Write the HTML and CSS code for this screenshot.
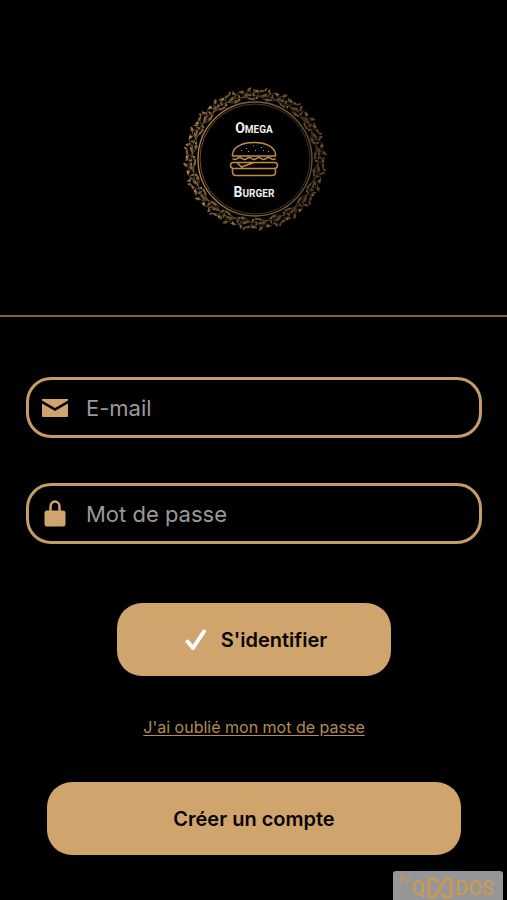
FILE: index.html
```html
<!DOCTYPE html>
<html lang="fr">
<head>
<meta charset="utf-8">
<meta name="viewport" content="width=device-width, initial-scale=1">
<title>Omega Burger</title>
<link rel="stylesheet" href="styles.css">
</head>
<body>
<header class="hero">
  <svg class="logo" viewBox="0 0 160 160" role="img" aria-label="Omega Burger">
    <defs>
      <linearGradient id="gold" x1="0" y1="0" x2="1" y2="0">
        <stop offset="0" stop-color="#b98645"/>
        <stop offset="0.4" stop-color="#80603a"/>
        <stop offset="1" stop-color="#6b5335"/>
      </linearGradient>
      <linearGradient id="shade" gradientUnits="userSpaceOnUse" x1="10" y1="70" x2="150" y2="90">
        <stop offset="0" stop-color="#fff"/>
        <stop offset="0.4" stop-color="#ccc"/>
        <stop offset="1" stop-color="#999"/>
      </linearGradient>
      <mask id="fade" maskUnits="userSpaceOnUse" x="0" y="0" width="160" height="160">
        <rect width="160" height="160" fill="url(#shade)"/>
      </mask>
      <g id="sprig">
        <path class="stem" d="M-16 -58Q-8 -66 4 -63T15 -68M-12 -61Q-11 -67 -6 -69M-2 -64Q2 -69 8 -69M5 -63Q10 -60 14 -60M-9 -62Q-5 -59 0 -59"/>
        <path class="leaf" d="M-15 -60q-3 -2 -2 -5q3 2 2 5M-11 -65q-4 0 -5 -3q4 0 5 3M-6 -68q-1 -3 2 -4q1 3 -2 4M-8 -63q2 -3 5 -2q-2 3 -5 2M-4 -60q2 -2 5 0q-3 2 -5 0M1 -66q-3 -1 -3 -4q3 1 3 4M4 -68q3 -2 6 0q-3 2 -6 0M8 -63q2 -3 5 -2q-2 3 -5 2M11 -60q3 -1 4 2q-3 1 -4 -2M13 -66q-1 -3 2 -4q1 3 -2 4"/>
        <circle class="berry" cx="-13" cy="-67" r="1"/>
        <circle class="berry" cx="2" cy="-61" r="1"/>
      </g>
      <g id="quarter">
        <use href="#sprig"/>
        <use href="#sprig" transform="rotate(13)"/>
        <use href="#sprig" transform="rotate(30)"/>
        <use href="#sprig" transform="rotate(43)"/>
        <use href="#sprig" transform="rotate(60)"/>
        <use href="#sprig" transform="rotate(73)"/>
      </g>
    </defs>
    <g mask="url(#fade)">
      <g transform="translate(81 79)">
        <use href="#quarter"/>
        <use href="#quarter" transform="rotate(90)"/>
        <use href="#quarter" transform="rotate(180)"/>
        <use href="#quarter" transform="rotate(270)"/>
      </g>
    </g>
    <circle class="ring" cx="81" cy="79" r="57"/>
    <circle class="ring ring-inner" cx="81" cy="79" r="55"/>
    <text class="brand" x="80" y="53"><tspan class="initial">O</tspan>MEGA</text>
    <g class="burger">
      <path d="M58.500 76V74C59.500 67 68 62.500 80 62.500S100.500 67 101.500 74V76Z"/>
      <path d="M58.500 78.500q2.400 2 4.800 0t4.800 0t4.800 0t4.800 0t4.800 0t4.800 0t4.800 0t4.800 0t4.800 0"/>
      <path d="M63 82.500H59.500A2.800 2.800 0 0 0 59.500 88.500H100.500A2.800 2.800 0 0 0 100.500 82.500H80L67.500 87L63 82.500H80"/>
      <path d="M58.500 89V92Q58.500 95.500 62 95.500H98Q101.500 95.500 101.500 92V89"/>
      <path class="seeds" d="M67 71l1 -1M72 68l1 1M74 72l1 -1M79 66l1 0M81 70l1 1M87 67l1 1M89 71l1 -1M94 71l1 1"/>
    </g>
    <text class="brand" x="80" y="117"><tspan class="initial">B</tspan>URGER</text>
  </svg>
</header>
<main class="content">
  <form class="login">
    <div class="field">
      <svg class="field-icon" viewBox="0 0 28 28" aria-hidden="true">
        <path d="M1 5H27V6.500L14 14L1 6.500Z"/>
        <path d="M1 9.500L14 17L27 9.500V22Q27 23 26 23H2Q1 23 1 22Z"/>
      </svg>
      <input class="field-input" type="email" placeholder="E-mail" aria-label="E-mail">
    </div>
    <div class="field">
      <svg class="field-icon" viewBox="0 0 28 28" aria-hidden="true">
        <path class="shackle" d="M9.500 13V6.500A4.500 5 0 0 1 18.500 6.500V13"/>
        <rect x="3.500" y="10.500" width="21" height="16" rx="2.500"/>
      </svg>
      <input class="field-input" type="password" placeholder="Mot de passe" aria-label="Mot de passe">
    </div>
    <button class="button button-login" type="submit">
      <svg class="check" viewBox="0 0 22 22" aria-hidden="true"><path d="M2.500 12.500L8 19L19 2.500"/></svg>
      <span>S'identifier</span>
    </button>
  </form>
  <a class="forgot" href="#">J'ai oublié mon mot de passe</a>
  <button class="button button-create" type="button">Créer un compte</button>
</main>
<aside class="badge">
  <span class="badge-by">by</span>
  <span class="badge-name">Q</span>
  <svg class="badge-loop" viewBox="0 0 26 22" aria-hidden="true"><path d="M10 6V5Q10 2 7 2H5Q2 2 2 5V17Q2 20 5 20Q8 20 10 16L16 6Q18 2 21 2Q24 2 24 5V17Q24 20 21 20H19Q16 20 16 17V16"/></svg>
  <span class="badge-name">DOS</span>
</aside>
</body>
</html>
```
FILE: styles.css
```css
* {
  box-sizing: border-box;
}

body {
  margin: 0;
  min-height: 100vh;
  background: #000;
  color: #cfa46d;
  font-family: Inter, "Liberation Sans", sans-serif;
}

.hero {
  display: flex;
  justify-content: center;
  padding: 80px 0 75px;
  border-bottom: 2px solid #80643f;
}

.logo {
  width: 160px;
  height: 160px;
}

.stem {
  fill: none;
  stroke: #8b693b;
  stroke-width: 0.6;
}

.leaf {
  fill: #8b6a40;
}

.berry {
  fill: #d09a50;
}

.ring {
  fill: none;
  stroke: url(#gold);
  stroke-width: 1.3;
}

.ring-inner {
  stroke-width: 0.6;
}

.brand {
  fill: #eee;
  font-family: Roboto, "Liberation Sans", sans-serif;
  font-size: 10px;
  font-weight: 700;
  text-anchor: middle;
}

.initial {
  font-size: 14px;
}

.burger {
  fill: none;
  stroke: #bd8d49;
  stroke-width: 1.5;
  stroke-linejoin: round;
}

.seeds {
  stroke: #b99b70;
  stroke-width: 1;
}

.content {
  display: flex;
  flex-direction: column;
  align-items: center;
  padding: 60px 25px 45px 26px;
}

.login {
  display: flex;
  flex-direction: column;
  align-items: center;
  gap: 45px;
  width: 100%;
}

.field {
  display: flex;
  align-items: center;
  gap: 17px;
  width: 100%;
  height: 61px;
  padding: 0 24px 0 12px;
  border: 3px solid #c59b66;
  border-radius: 25px;
}

.field-icon {
  flex: none;
  width: 28px;
  height: 28px;
  fill: #cfa46d;
}

.shackle {
  fill: none;
  stroke: #cfa46d;
  stroke-width: 2.5;
}

.field-input {
  flex: 1;
  min-width: 0;
  padding: 0;
  border: 0;
  outline: 0;
  background: transparent;
  color: #fff;
  font: 400 22px/32px Inter, "Liberation Sans", sans-serif;
}

.field-input::placeholder {
  color: #999;
  opacity: 1;
}

.button {
  display: flex;
  align-items: center;
  justify-content: center;
  gap: 14px;
  height: 73px;
  padding: 0 24px;
  border: 0;
  border-radius: 25px;
  background: #cfa46d;
  color: #080400;
  font: 600 20px/28px Inter, "Liberation Sans", sans-serif;
}

.button-login {
  width: 60%;
  margin-top: 14px;
  padding-left: 28px;
}

.check {
  width: 22px;
  height: 22px;
  fill: none;
  stroke: #fff;
  stroke-width: 4;
  stroke-linecap: round;
  stroke-linejoin: round;
}

.forgot {
  margin: 39px 0 43px;
  color: #b18b58;
  font-size: 16px;
  line-height: 24px;
  text-underline-offset: 2px;
}

.button-create {
  width: 91%;
}

.badge {
  position: fixed;
  right: 4px;
  bottom: 0;
  display: flex;
  align-items: center;
  gap: 2px;
  width: 110px;
  height: 29px;
  padding: 4px 6px 0;
  border-radius: 3px 3px 0 0;
  background: #969696;
  color: #c99a56;
  font-family: Roboto, "Liberation Sans", sans-serif;
}

.badge-by {
  align-self: flex-start;
  font-size: 10px;
  line-height: 10px;
}

.badge-name {
  font-size: 20px;
  font-weight: 500;
  line-height: 24px;
}

.badge-loop {
  flex: none;
  width: 26px;
  height: 22px;
  fill: none;
  stroke: #c99a56;
  stroke-width: 3;
}
```
